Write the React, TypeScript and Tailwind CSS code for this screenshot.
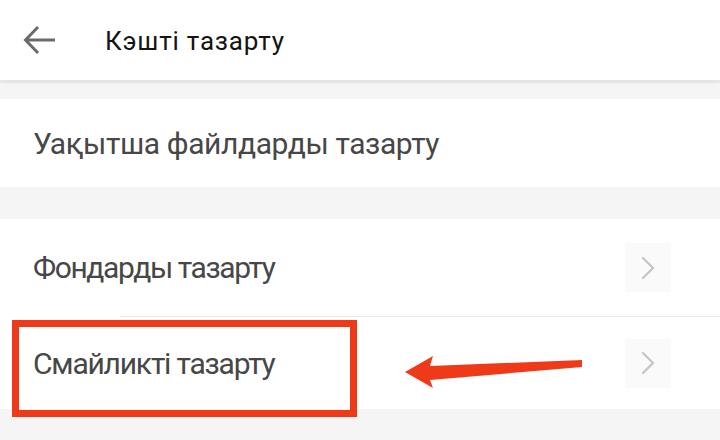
import React from 'react';

function Chevron() {
  return (
    <div className="w-[46px] h-[49px] bg-[#fafafa] flex items-center justify-center">
      <svg width="16" height="24" viewBox="0 0 16 24" fill="none">
        <path d="M3 2 L13 12 L3 22" stroke="#c6c6c6" strokeWidth="2.4" strokeLinecap="round" strokeLinejoin="round" />
      </svg>
    </div>
  );
}

export default function App() {
  return (
    <div className="w-[720px] h-[440px] bg-[#f5f5f5] flex flex-col relative overflow-hidden" style={{ fontFamily: 'Roboto, "Noto Sans", sans-serif' }}>
      <div className="h-[81px] bg-white flex items-center shadow-[0_1px_3px_rgba(0,0,0,0.12)] border-b border-[#e6e6e6] z-10">
        <svg className="ml-[23px]" width="34" height="30" viewBox="0 0 34 30" fill="none">
          <path d="M32 15 H3 M15 2 L2.5 15 L15 28" stroke="#6b6b6b" strokeWidth="3" strokeLinejoin="miter" />
        </svg>
        <span className="ml-[48px] mt-[3px] text-[26px] text-[#141414] tracking-[0.8px]">Кэшті тазарту</span>
      </div>

      <div className="mt-[18px] h-[88px] bg-white flex items-center pl-[33px]">
        <span className="text-[30px] text-[#474747] tracking-[-0.4px]">Уақытша файлдарды тазарту</span>
      </div>

      <div className="mt-[32px] bg-white flex flex-col">
        <div className="h-[97px] flex items-center justify-between pl-[33px] pr-[49px]">
          <span className="text-[30px] text-[#474747] tracking-[-1.4px]">Фондарды тазарту</span>
          <Chevron />
        </div>
        <div className="ml-[120px] h-px bg-[#e8e8e8]" />
        <div className="h-[92px] flex items-center justify-between pl-[33px] pr-[49px]">
          <span className="text-[30px] text-[#474747] tracking-[-1.2px]">Смайликті тазарту</span>
          <Chevron />
        </div>
      </div>

      <div className="absolute left-[12px] top-[320px] w-[345px] h-[97px] border-[7px] border-[#ef3a1a]" />
      <svg className="absolute left-0 top-0" width="720" height="440" viewBox="0 0 720 440">
        <polygon points="405,372 433,356 430,366 582,360 582,367 430,380 433,388" fill="#ef3a1a" />
      </svg>
    </div>
  );
}
